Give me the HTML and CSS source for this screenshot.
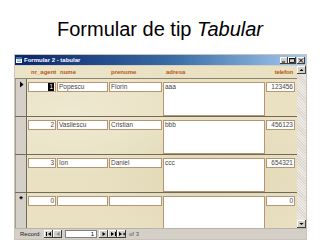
FILE: index.html
```html
<!DOCTYPE html>
<html>
<head>
<meta charset="utf-8">
<link rel="stylesheet" href="styles.css">
</head>
<body>
<div class="slide">
  <h1 class="title">Formular de tip <i>Tabular</i></h1>
  <div class="window">
    <div class="titlebar">
      <svg class="appicon" width="6" height="6" viewBox="0 0 6 6"><rect x="0" y="0" width="6" height="6" fill="#fff"/><rect x="0" y="0" width="6" height="2" fill="#3a6ea5"/><path d="M1 3h4M1 4.5h4" stroke="#3a6ea5" stroke-width="0.6"/></svg>
      <span class="wtitle">Formular 2 - tabular</span>
      <div class="wbtns">
        <span class="wbtn"><svg width="8" height="7" viewBox="0 0 8 7"><rect x="2" y="4.5" width="3" height="1" fill="#000"/></svg></span>
        <span class="wbtn"><svg width="8" height="7" viewBox="0 0 8 7"><rect x="1.5" y="1.5" width="5" height="4" fill="none" stroke="#000" stroke-width="0.8"/><rect x="1.5" y="1.2" width="5" height="1" fill="#000"/></svg></span>
        <span class="wbtn close"><svg width="8" height="7" viewBox="0 0 8 7"><path d="M2 1.5l4 4M6 1.5l-4 4" stroke="#000" stroke-width="1"/></svg></span>
      </div>
    </div>
    <div class="wbody">
      <div class="form">
        <div class="fheader">
          <span class="hspacer"></span>
          <span class="lbl c-nr">nr_agent</span>
          <span class="lbl c-nume">nume</span>
          <span class="lbl c-pren">prenume</span>
          <span class="lbl c-adr">adresa</span>
          <span class="lbl c-tel right">telefon</span>
        </div>
        <div class="row">
          <div class="sel"><svg width="5" height="7" viewBox="0 0 5 7"><path d="M1 0.5L4.5 3.5L1 6.5Z" fill="#000"/></svg></div>
          <div class="cells">
            <span class="box c-nr right"><span class="hilite">1</span></span>
            <span class="box c-nume">Popescu</span>
            <span class="box c-pren">Florin</span>
            <span class="box c-adr tall">aaa</span>
            <span class="box c-tel right">123456</span>
          </div>
        </div>
        <div class="row">
          <div class="sel"></div>
          <div class="cells">
            <span class="box c-nr right">2</span>
            <span class="box c-nume">Vasilescu</span>
            <span class="box c-pren">Cristian</span>
            <span class="box c-adr tall">bbb</span>
            <span class="box c-tel right">456123</span>
          </div>
        </div>
        <div class="row">
          <div class="sel"></div>
          <div class="cells">
            <span class="box c-nr right">3</span>
            <span class="box c-nume">Ion</span>
            <span class="box c-pren">Daniel</span>
            <span class="box c-adr tall">ccc</span>
            <span class="box c-tel right">654321</span>
          </div>
        </div>
        <div class="row last">
          <div class="sel"><span class="star">*</span></div>
          <div class="cells">
            <span class="box c-nr right">0</span>
            <span class="box c-nume"></span>
            <span class="box c-pren"></span>
            <span class="box c-adr tall"></span>
            <span class="box c-tel right">0</span>
          </div>
        </div>
      </div>
      <div class="vscroll">
        <span class="sbtn"><svg width="7" height="6" viewBox="0 0 7 6"><path d="M1.5 4L3.5 2L5.5 4Z" fill="#000"/></svg></span>
        <span class="strack"></span>
        <span class="sbtn"><svg width="7" height="6" viewBox="0 0 7 6"><path d="M1.5 2L3.5 4L5.5 2Z" fill="#000"/></svg></span>
      </div>
    </div>
    <div class="nav">
      <span class="navlbl">Record:</span>
      <span class="nbtn"><svg width="8" height="6" viewBox="0 0 8 6"><path d="M1.5 1v4" stroke="#000"/><path d="M6 1L3 3L6 5Z" fill="#000"/></svg></span>
      <span class="nbtn"><svg width="8" height="6" viewBox="0 0 8 6"><path d="M5.5 1L2.5 3L5.5 5Z" fill="#888"/></svg></span>
      <span class="navinput">1</span>
      <span class="nbtn"><svg width="8" height="6" viewBox="0 0 8 6"><path d="M2.5 1L5.5 3L2.5 5Z" fill="#000"/></svg></span>
      <span class="nbtn"><svg width="8" height="6" viewBox="0 0 8 6"><path d="M2 1L5 3L2 5Z" fill="#000"/><path d="M6.5 1v4" stroke="#000"/></svg></span>
      <span class="nbtn"><svg width="8" height="6" viewBox="0 0 8 6"><path d="M1 1L4 3L1 5Z" fill="#000"/><path d="M5 3h2.5M6.25 1.75v2.5" stroke="#000" stroke-width="0.8"/></svg></span>
      <span class="navlbl of">of 3</span>
    </div>
  </div>
</div>
</body>
</html>
```

FILE: styles.css
```css
html, body {
  margin: 0;
  padding: 0;
  background: #ffffff;
}
.slide {
  width: 320px;
  height: 240px;
  overflow: hidden;
  padding-top: 19px;
  box-sizing: border-box;
}
.title {
  margin: 0 0 15px 0;
  font-family: "Liberation Sans", Arial, sans-serif;
  font-weight: normal;
  font-size: 20px;
  line-height: 20px;
  height: 20px;
  text-align: center;
  color: #000;
}
.window {
  margin-left: 14px;
  width: 293px;
  height: 186px;
  box-sizing: border-box;
  border: 1px solid #c8c4bc;
  background: #d4d0c8;
  display: flex;
  flex-direction: column;
  font-family: "Liberation Sans", Arial, sans-serif;
}
.titlebar {
  height: 10px;
  flex: none;
  display: flex;
  align-items: center;
  background: linear-gradient(to right, #0a246a, #3a6ea5 55%, #a6caf0);
  padding-left: 1px;
}
.appicon { flex: none; margin-right: 2px; }
.wtitle {
  color: #fff;
  font-weight: bold;
  font-size: 6px;
  line-height: 10px;
  white-space: nowrap;
}
.wbtns {
  margin-left: auto;
  display: flex;
  margin-right: 1px;
}
.wbtn {
  width: 8px;
  height: 7px;
  background: #d4d0c8;
  box-shadow: inset -1px -1px #404040, inset 1px 1px #fff;
  display: flex;
}
.wbtn.close { margin-left: 1px; }
.wbody {
  flex: none;
  height: 162px;
  margin-top: 1px;
  display: flex;
}
.form {
  flex: 1;
  min-width: 0;
  display: flex;
  flex-direction: column;
  background: #e9e1c2;
  background-image:
    radial-gradient(ellipse at 20% 30%, rgba(255,255,255,0.25), transparent 40%),
    radial-gradient(ellipse at 70% 70%, rgba(180,165,120,0.18), transparent 45%);
}
.fheader {
  height: 12px;
  flex: none;
  display: flex;
  gap: 1px;
  align-items: center;
  border-bottom: 1px solid #8a8470;
}
.hspacer { width: 12px; flex: none; margin-right: 1px; }
.lbl {
  font-size: 6px;
  font-weight: bold;
  color: #b65a24;
  padding: 0 1px;
  box-sizing: border-box;
  white-space: nowrap;
}
.right { text-align: right; }
.fheader .c-tel { padding-right: 3px; letter-spacing: -0.2px; }
.row {
  height: 38px;
  flex: none;
  display: flex;
  box-sizing: border-box;
  border-bottom: 1px solid #6f6a5a;
}
.row.last { flex: 1; border-bottom: 0; }
.sel {
  width: 12px;
  flex: none;
  box-sizing: border-box;
  background: #d4d0c8;
  border-left: 1px solid #a09c94;
  border-right: 1px solid #6f6a5a;
  display: flex;
  justify-content: center;
  padding-top: 2px;
  align-items: flex-start;
}
.star {
  font-size: 9px;
  line-height: 8px;
  font-weight: bold;
  color: #000;
}
.cells {
  display: flex;
  gap: 1px;
  align-items: flex-start;
  padding-top: 3px;
  padding-left: 1px;
}
.box {
  height: 10px;
  box-sizing: border-box;
  background: #fff;
  border: 1px solid #b59573;
  font-size: 6.5px;
  line-height: 8px;
  color: #444;
  padding: 0 1px;
  white-space: nowrap;
  overflow: hidden;
  display: block;
}
.box.tall { height: 34px; }
.c-nr { width: 28px; flex: none; }
.c-nume { width: 51px; flex: none; }
.c-pren { width: 53px; flex: none; }
.c-adr { width: 102px; flex: none; }
.c-tel { width: 29px; flex: none; }
.fheader .c-nr { padding-left: 2px; }
.fheader .c-nume { padding-left: 2px; }
.fheader .c-adr { padding-left: 2px; }
.hilite {
  background: #000;
  color: #fff;
  padding: 0 1px;
  display: inline-block;
  height: 8px;
}
.vscroll {
  width: 9px;
  flex: none;
  display: flex;
  flex-direction: column;
  background: #e4e1db;
}
.sbtn {
  height: 8px;
  flex: none;
  background: #d4d0c8;
  box-shadow: inset -1px -1px #404040, inset 1px 1px #fff;
  display: flex;
  align-items: center;
  justify-content: center;
}
.strack {
  flex: 1;
  background: repeating-linear-gradient(45deg, #eeebe6 0 1px, #dcd8d0 1px 2px);
}
.nav {
  flex: none;
  height: 11px;
  display: flex;
  align-items: center;
  background: #d4d0c8;
  border-top: 1px solid #b8b4ac;
  box-sizing: border-box;
  padding-left: 5px;
}
.navlbl {
  font-size: 6px;
  color: #222;
  margin-right: 3px;
  white-space: nowrap;
}
.navlbl.of { margin-left: 3px; color: #555; }
.nbtn {
  width: 9px;
  height: 8px;
  flex: none;
  background: #d4d0c8;
  box-shadow: inset -1px -1px #404040, inset 1px 1px #fff;
  display: flex;
  align-items: center;
  justify-content: center;
}
.navinput {
  width: 32px;
  height: 8px;
  box-sizing: border-box;
  background: #fff;
  border: 1px solid #808080;
  font-size: 6px;
  line-height: 6px;
  text-align: right;
  padding-right: 2px;
  margin: 0 2px 0 3px;
  color: #000;
}
```
